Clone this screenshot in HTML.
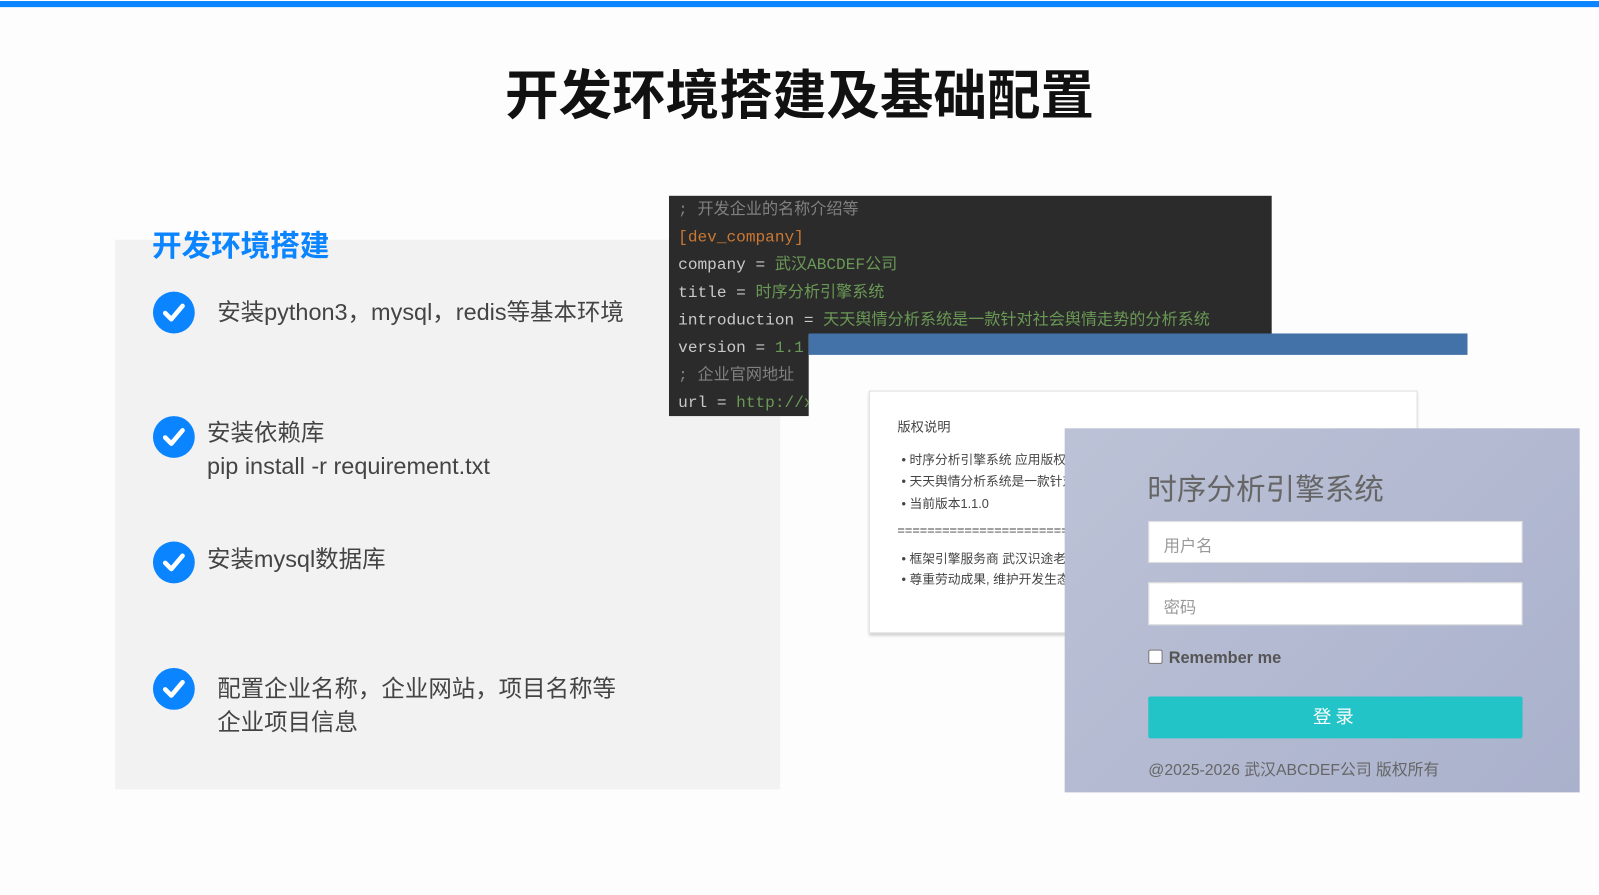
<!DOCTYPE html>
<html><head><meta charset="utf-8"><style>
*{margin:0;padding:0;box-sizing:border-box}
body{width:1599px;height:895px;background:#fdfdfd;position:relative;overflow:hidden;font-family:"Liberation Sans","Noto Sans CJK SC",sans-serif}
#w{position:absolute;left:0;top:0;width:1568px;height:878px;transform:scale(1.0198);transform-origin:0 0}
.a{position:absolute}
.mono{font-family:"Liberation Mono","Noto Sans CJK SC",monospace;font-size:15.8px;color:#c8c8c8;white-space:nowrap}
.g{color:#6a9955}
.chk{position:absolute;left:150px;width:41px;height:41px;border-radius:50%;background:#0a84ff}
.chk svg{position:absolute;left:9px;top:10px}
.t{position:absolute;font-size:23px;color:#444;line-height:33px}
.cp{font-size:12.5px;color:#444;position:absolute;left:884px}
</style></head><body><div id="w">
<div class="a" style="left:0;top:1px;width:1568px;height:6px;background:#0a84ff"></div>
<div class="a" style="left:0;top:52px;width:1568px;text-align:center;font-size:52.5px;font-weight:bold;color:#111">开发环境搭建及基础配置</div>

<div class="a" style="left:113px;top:235px;width:652px;height:539px;background:#f2f2f2"></div>
<div class="a" style="left:149px;top:218px;font-size:29px;font-weight:bold;color:#0a84ff">开发环境搭建</div>

<div class="chk" style="top:286px"><svg width="23" height="21" viewBox="0 0 23 21"><path d="M3 11 L9 17 L20 4" stroke="#fff" stroke-width="4.5" fill="none" stroke-linecap="round" stroke-linejoin="round"/></svg></div>
<div class="t" style="left:213px;top:290px">安装python3，mysql，redis等基本环境</div>
<div class="chk" style="top:408px"><svg width="23" height="21" viewBox="0 0 23 21"><path d="M3 11 L9 17 L20 4" stroke="#fff" stroke-width="4.5" fill="none" stroke-linecap="round" stroke-linejoin="round"/></svg></div>
<div class="t" style="left:203px;top:408px">安装依赖库<br>pip install -r requirement.txt</div>
<div class="chk" style="top:531px"><svg width="23" height="21" viewBox="0 0 23 21"><path d="M3 11 L9 17 L20 4" stroke="#fff" stroke-width="4.5" fill="none" stroke-linecap="round" stroke-linejoin="round"/></svg></div>
<div class="t" style="left:203px;top:532px">安装mysql数据库</div>
<div class="chk" style="top:655px"><svg width="23" height="21" viewBox="0 0 23 21"><path d="M3 11 L9 17 L20 4" stroke="#fff" stroke-width="4.5" fill="none" stroke-linecap="round" stroke-linejoin="round"/></svg></div>
<div class="t" style="left:213px;top:659px">配置企业名称，企业网站，项目名称等<br>企业项目信息</div>

<div class="a" style="left:656px;top:192px;width:591px;height:136px;background:#2b2b2b"></div>
<div class="a" style="left:656px;top:327px;width:137px;height:81px;background:#2b2b2b"></div>
<div class="a" style="left:793px;top:327px;width:646px;height:21px;background:#4272a8"></div>
<div class="a mono" style="left:665px;top:193px;line-height:27px;width:580px">
<div style="color:#808080">; 开发企业的名称介绍等</div>
<div style="color:#cc7832">[dev_company]</div>
<div>company = <span class="g">武汉ABCDEF公司</span></div>
<div>title = <span class="g">时序分析引擎系统</span></div>
<div>introduction = <span class="g">天天舆情分析系统是一款针对社会舆情走势的分析系统</span></div>
<div style="width:128px;overflow:hidden">version = <span class="g">1.1</span></div>
<div style="color:#808080">; 企业官网地址</div>
<div style="width:128px;overflow:hidden">url = <span class="g">http://x</span></div>
</div>

<div class="a" style="left:852px;top:383px;width:538px;height:238px;background:#fff;border:1px solid #e0e0e0;box-shadow:0 2px 3px rgba(0,0,0,.2)"></div>
<div class="a" style="left:880px;top:408px;font-size:13px;color:#444">版权说明</div>
<div class="cp" style="top:440px">• 时序分析引擎系统 应用版权归</div>
<div class="cp" style="top:461px">• 天天舆情分析系统是一款针对</div>
<div class="cp" style="top:483px">• 当前版本1.1.0</div>
<div class="cp" style="top:513px;left:880px;white-space:nowrap">==============================</div>
<div class="cp" style="top:537px">• 框架引擎服务商 武汉识途老码</div>
<div class="cp" style="top:557px">• 尊重劳动成果, 维护开发生态</div>

<div class="a" style="left:1044px;top:420px;width:505px;height:357px;background:linear-gradient(135deg,#bcc2d6,#aab1cc)"></div>
<div class="a" style="left:1125px;top:457px;font-size:29px;color:#666">时序分析引擎系统</div>
<div class="a" style="left:1126px;top:511px;width:367px;height:41px;background:#fff;border:1px solid #ddd;font-size:16px;color:#999;padding:10px 14px">用户名</div>
<div class="a" style="left:1126px;top:571px;width:367px;height:42px;background:#fff;border:1px solid #ddd;font-size:16px;color:#999;padding:10px 14px">密码</div>
<div class="a" style="left:1126px;top:637px;width:14px;height:14px;background:#fff;border:1px solid #777;border-radius:2px"></div>
<div class="a" style="left:1146px;top:637px;font-size:16px;font-weight:bold;color:#555">Remember me</div>
<div class="a" style="left:1126px;top:683px;width:367px;height:41px;background:#22c4c8;border-radius:2px;color:#fff;font-size:18px;text-align:center;line-height:41px;letter-spacing:4px">登录</div>
<div class="a" style="left:1126px;top:743px;font-size:15.5px;color:#666">@2025-2026 武汉ABCDEF公司 版权所有</div>
</div></body></html>
